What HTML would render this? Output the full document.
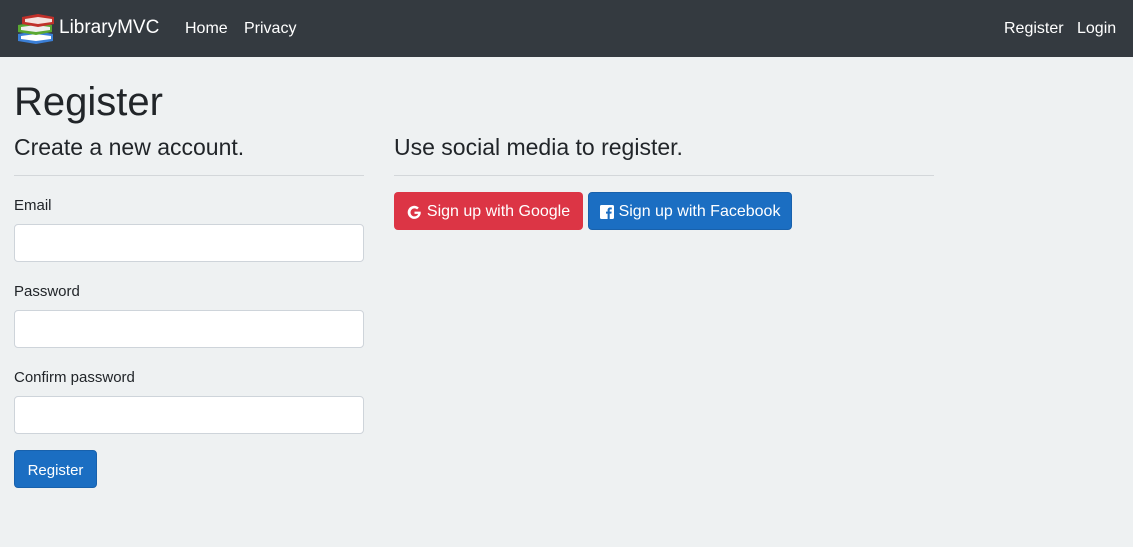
<!DOCTYPE html>
<html><head><style>
*{box-sizing:border-box;margin:0;padding:0}
body{width:1133px;height:547px;background:#eef1f2;font-family:"Liberation Sans",sans-serif;color:#212529;position:relative;overflow:hidden}
nav{height:57px;background:#343a40;position:relative}
.t{position:absolute;color:#fff;font-size:16px;top:20px}
.brand{font-size:19px;top:17px;left:59px}
.a{position:absolute}
h1{position:absolute;left:14px;top:80px;font-size:40px;font-weight:500}
h4{position:absolute;font-size:23px;font-weight:500;top:134px}
hr{position:absolute;border:0;border-top:1px solid #d3d7da;top:175px;height:0}
label{position:absolute;left:14px;font-size:15px}
.in{position:absolute;left:14px;width:350px;height:38px;background:#fff;border:1px solid #ced4da;border-radius:4px}
.btn{position:absolute;height:38px;border-radius:4px;color:#fff;font-size:16px;display:flex;align-items:center;justify-content:center;gap:5px;padding-top:2px}
</style></head><body>
<nav>
<svg class="a" style="left:17px;top:13px" width="38" height="32" viewBox="0 0 38 32">
<path d="M1 21 L19 18 L36 21 L36 28 L19 31 L1 28Z" fill="#3b7fd6"/>
<path d="M4 23 L19 21 L34 23 L34 26 L19 28 L4 26Z" fill="#fff"/>
<path d="M1 12 L19 9 L35 12 L35 19 L19 22 L1 19Z" fill="#5aa832"/>
<path d="M4 14 L19 12 L33 14 L33 17 L19 19 L4 17Z" fill="#eee"/>
<path d="M5 4 L21 1 L37 4 L37 11 L21 14 L5 11Z" fill="#c0302a"/>
<path d="M8 6 L21 4 L35 6 L35 9 L21 11 L8 9Z" fill="#f3e3e0"/>
</svg>
<span class="t brand">LibraryMVC</span>
<span class="t" style="left:185px">Home</span>
<span class="t" style="left:244px">Privacy</span>
<span class="t" style="left:1004px">Register</span>
<span class="t" style="left:1077px">Login</span>
</nav>
<h1>Register</h1>
<h4 style="left:14px">Create a new account.</h4>
<h4 style="left:394px">Use social media to register.</h4>
<hr style="left:14px;width:350px">
<hr style="left:394px;width:540px">
<label style="top:197px">Email</label>
<div class="in" style="top:224px"></div>
<label style="top:283px">Password</label>
<div class="in" style="top:310px"></div>
<label style="top:369px">Confirm password</label>
<div class="in" style="top:396px"></div>
<div class="btn" style="left:14px;top:450px;width:83px;background:#1b6ec2;border:1px solid #1861ac;font-size:15px">Register</div>
<div class="btn" style="left:394px;top:192px;width:189px;background:#dc3545">
<svg width="15" height="15" viewBox="0 0 16 16"><path d="M14.5 7 H8 V9.5 H12 A4.3 4.3 0 1 1 10.8 4.6 L12.6 2.8 A7 7 0 1 0 14.7 8.5Z" fill="#fff"/></svg>Sign up with Google</div>
<div class="btn" style="left:588px;top:192px;width:204px;background:#1b6ec2;border:1px solid #1861ac">
<svg width="14" height="14" viewBox="0 0 14 14"><rect width="14" height="14" rx="1.5" fill="#fff"/><path d="M9.7 14 V8.6 H11.4 L11.7 6.6 H9.7 V5.4 C9.7 4.8 9.9 4.4 10.8 4.4 H11.8 V2.6 C11.5 2.5 10.9 2.5 10.2 2.5 C8.7 2.5 7.6 3.4 7.6 5.1 V6.6 H6 V8.6 H7.6 V14Z" fill="#1b6ec2"/></svg>Sign up with Facebook</div>
</body></html>
